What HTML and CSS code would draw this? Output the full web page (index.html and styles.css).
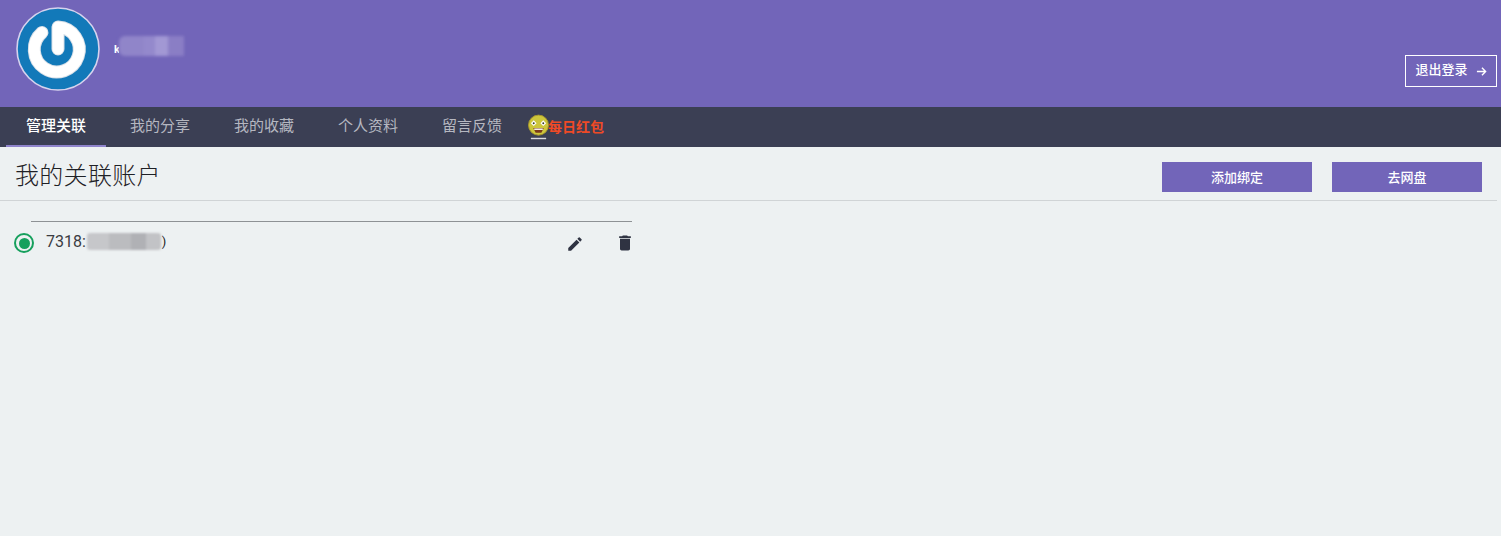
FILE: index.html
```html
<!DOCTYPE html>
<html lang="zh-CN">
<head>
<meta charset="utf-8">
<title>我的关联账户</title>
<link rel="stylesheet" href="styles.css">
</head>
<body>
<header class="top">
  <div class="user">
    <svg class="avatar" viewBox="0 0 84 84" width="84" height="84" aria-hidden="true">
      <circle cx="42" cy="42" r="41" fill="#1279b9" stroke="#d6d3ee" stroke-width="1.6"/>
      <path d="M26 25.500 A22.500 22.500 0 1 0 42 20 V42" fill="none" stroke="#d9e0e8" stroke-width="13" stroke-linecap="round" stroke-linejoin="round"/>
      <path d="M26 25.500 A22.500 22.500 0 1 0 42 20 V42" fill="none" stroke="#ffffff" stroke-width="11" stroke-linecap="round" stroke-linejoin="round"/>
    </svg>
    <div class="name">
      <span class="name-bit">k</span><span class="name-mask"></span>
    </div>
  </div>
  <a class="logout" href="#">退出登录
    <svg viewBox="0 0 12 12" width="11" height="11" aria-hidden="true"><path d="M1 6H10.500M6.500 2L10.500 6L6.500 10" fill="none" stroke="#fff" stroke-width="1.500"/></svg>
  </a>
</header>
<nav class="tabs">
  <a class="tab active" href="#">管理关联</a>
  <a class="tab" href="#">我的分享</a>
  <a class="tab" href="#">我的收藏</a>
  <a class="tab" href="#">个人资料</a>
  <a class="tab" href="#">留言反馈</a>
  <a class="promo" href="#">
    <svg viewBox="0 0 22 28" width="22" height="28" aria-hidden="true">
      <circle cx="11" cy="11" r="10.500" fill="#cdc63c" stroke="#a8962c" stroke-width="1"/>
      <path d="M6 6L9 9L6 12L3 9Z M16 6L19 9L16 12L13 9Z" fill="#fff"/>
      <circle cx="6" cy="9" r="1" fill="#3a3a20"/>
      <circle cx="16" cy="9" r="1" fill="#3a3a20"/>
      <path d="M5.500 14H16.500L14 19H8Z" fill="#7a3a1c"/>
      <path d="M6.500 14.500H15.500V16H6.500Z" fill="#fff"/>
      <path d="M3 25H19" stroke="#d8d8de" stroke-width="1.500"/>
    </svg>
    <span>每日红包</span>
  </a>
</nav>
<main class="content">
  <div class="toolbar">
    <h1>我的关联账户</h1>
    <div class="actions">
      <a class="btn" href="#">添加绑定</a>
      <a class="btn" href="#">去网盘</a>
    </div>
  </div>
  <section class="accounts">
    <div class="account">
      <span class="radio"><span class="dot"></span></span>
      <div class="account-name">
        <span>7318:</span><span class="acc-mask"></span><span class="acc-tail">)</span>
      </div>
      <button class="icon-btn icon-edit" aria-label="编辑">
        <svg viewBox="0 0 24 24" width="18" height="18"><path fill="#2f3342" d="M3 17.250V21h3.750L17.810 9.940l-3.750-3.750L3 17.250zM20.710 7.040a1 1 0 0 0 0-1.410l-2.340-2.340a1 1 0 0 0-1.410 0l-1.830 1.830 3.750 3.750 1.830-1.830z"/></svg>
      </button>
      <button class="icon-btn icon-trash" aria-label="删除">
        <svg viewBox="0 0 24 24" width="20" height="20"><path fill="#2f3342" d="M6 19c0 1.100.9 2 2 2h8c1.100 0 2-.9 2-2V7H6v12zM19 4h-3.500l-1-1h-5l-1 1H5v2h14V4z"/></svg>
      </button>
    </div>
  </section>
</main>
</body>
</html>
```
FILE: styles.css
```css
* { box-sizing: border-box; }
html, body { margin: 0; height: 100%; }
body {
  background: #edf1f2;
  color: #33363f;
  font-family: Roboto, "Noto Sans CJK SC", sans-serif;
  overflow: hidden;
}
a { text-decoration: none; color: inherit; }

.top {
  height: 107px;
  background: #7265b9;
  display: flex;
  justify-content: space-between;
  padding: 7px 4px 20px 16px;
}
.user { display: flex; align-items: flex-start; }
.avatar { display: block; }
.name {
  display: flex;
  align-items: center;
  margin: 28px 0 0 14px;
  height: 22px;
}
.name-bit { color: #fff; font-size: 11px; font-weight: 700; width: 5px; margin-top: 6px; overflow: hidden; }
.name-mask {
  width: 65px;
  height: 20px;
  border-radius: 6px 0 0 6px;
  background: linear-gradient(90deg, #9085c9 0 38%, #9489cc 38% 55%, #a298d4 55% 75%, #8a7ec5 75% 100%);
  filter: blur(1.500px);
}
.logout {
  align-self: flex-end;
  width: 92px;
  height: 32px;
  border: 1px solid #fff;
  color: #fff;
  font-size: 13px;
  font-weight: 500;
  line-height: 18px;
  display: flex;
  align-items: center;
  justify-content: center;
  gap: 8px;
  padding: 0 0 3px 0;
}
.logout svg { margin-top: 3px; }

.tabs {
  height: 40px;
  background: #3b3f54;
  display: flex;
  align-items: stretch;
  gap: 4px;
  padding-left: 6px;
}
.tab {
  width: 100px;
  display: flex;
  align-items: center;
  justify-content: center;
  color: #b5b7c0;
  font-size: 15px;
  border-bottom: 2px solid transparent;
  padding-bottom: 3px;
}
.tab.active {
  color: #fff;
  font-weight: 500;
  border-bottom-color: #8f84cc;
}
.promo {
  display: flex;
  align-items: center;
  margin-left: 2px;
  color: #ef4a26;
  font-size: 14px;
  font-weight: 700;
  letter-spacing: 0;
}
.promo span { margin-left: -1px; margin-top: -2px; }
.promo svg { display: block; margin: 1px 0 0 0; width: 21px; }

.toolbar {
  height: 54px;
  margin-right: 4px;
  border-bottom: 1px solid #d0d4d6;
  display: flex;
  align-items: flex-start;
  justify-content: space-between;
  padding: 15px 15px 0 15px;
}
h1 {
  margin: 0;
  font-size: 24px;
  font-weight: 300;
  letter-spacing: 0.3px;
  line-height: 28px;
  color: #1f2126;
}
.actions { display: flex; gap: 20px; }
.btn {
  width: 150px;
  height: 30px;
  padding-bottom: 2px;
  background: #7265b9;
  color: #fff;
  font-size: 13px;
  font-weight: 500;
  display: flex;
  align-items: center;
  justify-content: center;
}

.accounts {
  width: 632px;
  padding: 20px 0 0 14px;
}
.account {
  position: relative;
  display: flex;
  align-items: flex-start;
  padding-top: 12px;
}
.account::before {
  content: "";
  position: absolute;
  top: 0;
  left: 17px;
  right: 0;
  height: 1px;
  background: #8e9295;
}
.radio {
  width: 20px;
  height: 20px;
  border: 2.500px solid #16a05d;
  border-radius: 50%;
  display: flex;
  align-items: center;
  justify-content: center;
  flex: none;
}
.dot { width: 11px; height: 11px; border-radius: 50%; background: #16a05d; }
.account-name {
  display: flex;
  align-items: center;
  margin-left: 12px;
  height: 18px;
  font-size: 16px;
  line-height: 18px;
  flex: 1;
  color: #3a3c42;
}
.acc-mask {
  width: 74px;
  height: 17px;
  margin: -2px 0 0 1px;
  border-radius: 3px;
  background: linear-gradient(90deg, #c6c7ca 0 30%, #bbbcbf 30% 60%, #b0b1b5 60% 80%, #c2c3c6 80% 100%);
  filter: blur(1px);
}
.acc-tail { font-size: 13px; margin-left: 1px; color: #222; }
.icon-btn {
  border: 0;
  padding: 0;
  background: none;
  width: 20px;
  height: 20px;
  display: block;
}
.icon-btn svg { display: block; margin: auto; }
.icon-edit { margin-right: 30px; padding-top: 1px; }
.icon-trash { margin-right: -3px; }
```
